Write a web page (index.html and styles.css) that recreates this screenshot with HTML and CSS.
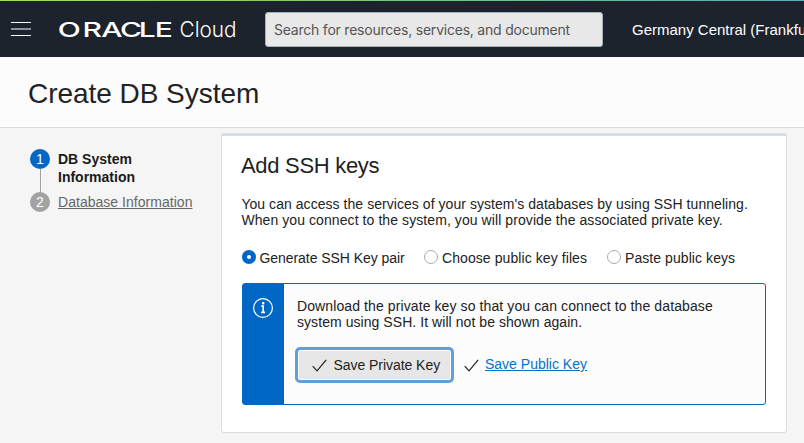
FILE: index.html
```html
<!DOCTYPE html>
<html lang="en">
<head>
<meta charset="utf-8">
<title>Create DB System</title>
<link rel="stylesheet" href="styles.css">
</head>
<body>
<header class="topbar">
  <button class="menu" aria-label="Menu"><span></span><span></span><span></span></button>
  <svg class="logo" width="180" height="24" viewBox="0 0 180 24" role="img">
    <text class="logo-brand" transform="scale(1.5 1)" x="-0.9 15.6 28.1 40.7 53.2 63.8" y="19">ORACLE</text>
    <text class="logo-cloud" x="120.6" y="19.4" textLength="57" lengthAdjust="spacingAndGlyphs">Cloud</text>
  </svg>
  <div class="search">Search for resources, services, and document</div>
  <div class="region">Germany Central (Frankfurt)</div>
</header>
<div class="titlebar"><h1>Create DB System</h1></div>
<main class="layout">
  <ol class="steps">
    <li class="step active"><span class="dot">1</span><span class="step-label">DB System<br>Information</span></li>
    <li class="step"><span class="dot">2</span><a class="step-label">Database Information</a></li>
  </ol>
  <section class="card">
    <h2>Add SSH keys</h2>
    <p class="intro">You can access the services of your system's databases by using SSH tunneling.<br><span class="intro-end">When you connect to the system, you will provide the associated private key.</span></p>
    <div class="radios">
      <label class="radio r1"><i class="on"></i><span>Generate SSH Key pair</span></label>
      <label class="radio r2"><i></i><span>Choose public key files</span></label>
      <label class="radio r3"><i></i><span>Paste public keys</span></label>
    </div>
    <div class="notice">
      <div class="notice-side">
        <svg width="20" height="20" viewBox="0 0 20 20" fill="none" stroke="#fff"><circle cx="10" cy="10" r="9.4" stroke-width="1.2"/><path d="M8.3 8.1H10.2V14.8M8.1 14.4H12.1" stroke-width="1.6"/><path d="M10.2 4V6.4" stroke-width="2.2"/></svg>
      </div>
      <div class="notice-body">
        <p>Download the private key so that you can connect to the database<br><span class="notice-end">system using SSH. It will not be shown again.</span></p>
        <div class="actions">
          <button class="save"><svg class="check" width="15" height="13" viewBox="0 0 15 13"><path d="M.7 7.2 5 11.8 14.2.8"/></svg><span>Save Private Key</span></button>
          <svg class="check second" width="15" height="13" viewBox="0 0 15 13"><path d="M.7 7.2 5 11.8 14.2.8"/></svg>
          <a class="link">Save Public Key</a>
        </div>
      </div>
    </div>
  </section>
</main>
</body>
</html>
```
FILE: styles.css
```css
* { box-sizing: border-box; }
body {
  margin: 0;
  height: 443px;
  overflow: hidden;
  background: #f5f5f5;
  color: #222;
  font: 14px/16px "Liberation Sans", Arial, sans-serif;
}
h1, h2, p, ol { margin: 0; padding: 0; font-weight: 400; }
button { font: inherit; color: inherit; border: 0; padding: 0; }
.topbar {
  display: flex;
  height: 57px;
  padding-top: 1px;
  background: linear-gradient(90deg, #a0e35c, #7fd06f 35%, #68bd96 70%, #5aa9bd) top / 100% 1px no-repeat #1c232c;
  white-space: nowrap;
}
.menu {
  flex: none;
  display: flex;
  flex-direction: column;
  gap: 6px;
  width: 20px;
  margin: 21px 28px 0 11px;
  background: none;
}
.menu span { height: 1px; background: #fff; }
.menu span:nth-child(2) { height: 2px; margin: -1px 0 0; background: #8e9194; }
.menu span:nth-child(3) { margin-top: -1px; }
.logo { flex: none; margin-top: 17px; overflow: visible; }
.logo text { fill: #fff; }
.logo-brand { font: 500 20px Inter, sans-serif; }
.logo-cloud { font: 300 22px Inter, sans-serif; }
.search {
  flex: none;
  width: 338px;
  height: 35px;
  margin: 11px 29px 0 26px;
  padding-left: 8px;
  border: 1px solid #a3b1b8;
  border-radius: 3px;
  background: #e8e8e8;
  color: #555;
  font: 14px/34px Inter, sans-serif;
  letter-spacing: -.22px;
}
.region { flex: none; color: #fff; font-size: 15px; line-height: 58px; }
.titlebar { height: 71px; border-bottom: 1px solid #ddd; background: #fcfcfc; }
h1 { padding: 20px 0 0 28px; font-size: 28px; line-height: 34px; letter-spacing: -.04px; }
.layout { display: flex; }
.steps { flex: none; width: 221px; padding: 21px 0 0 30px; list-style: none; }
.step { position: relative; display: flex; gap: 8px; height: 43px; }
.step.active::before {
  content: "";
  position: absolute;
  left: 10px;
  top: 20px;
  width: 1px;
  height: 23px;
  background: #a2a2a2;
}
.dot {
  width: 20px;
  height: 20px;
  border-radius: 50%;
  background: #a2a2a2;
  color: #fff;
  line-height: 20px;
  text-align: center;
}
.active .dot { background: #0067c5; }
.step-label { margin-top: 1px; line-height: 18px; color: #666; letter-spacing: .03px; text-decoration: underline; text-underline-offset: 1px; white-space: nowrap; }
.active .step-label { color: #1a1a1a; font-weight: 700; letter-spacing: 0; text-decoration: none; }
.card {
  width: 566px;
  height: 300px;
  margin-top: 5px;
  padding: 17px 19px 0;
  border: 1px solid #d9dde0;
  border-top: 3px solid #d9dde0;
  border-radius: 3px;
  background: #fff;
  white-space: nowrap;
}
h2 { font-size: 22px; line-height: 26px; letter-spacing: -.3px; }
.intro { margin-top: 17px; padding-left: .4px; letter-spacing: .05px; }
.intro-end { letter-spacing: .08px; }
.radios { display: flex; height: 18px; margin-top: 21px; padding-left: 1px; }
.radio { display: flex; align-items: center; gap: 4px; }
.radio i { width: 14px; height: 14px; margin-top: -2px; border: 1px solid #a6abb8; border-radius: 50%; background: #fff; }
.radio i.on { border: 5px solid #0067c5; }
.r1 { width: 182px; gap: 3.5px; letter-spacing: -.06px; }
.r2 { width: 183px; letter-spacing: .08px; }
.r3 { letter-spacing: .07px; }
.notice { display: flex; width: 524px; height: 122px; margin: 16px 0 0 1px; border: 1px solid #0067c5; border-radius: 3px; background: #fcfcfc; }
.notice-side { width: 41px; padding: 14px 0 0 10px; background: #0067c5; }
.notice-body { padding: 14px 0 0 13px; letter-spacing: .1px; }
.notice-end { letter-spacing: .06px; }
.actions { display: flex; margin: 17px 0 0 -2px; letter-spacing: 0; }
.save {
  display: flex;
  align-items: center;
  gap: 6.5px;
  width: 159px;
  height: 36px;
  padding-left: 14px;
  border: 3px solid #629fda;
  border-radius: 5px;
  background: #e6e6e6;
  box-shadow: inset 0 0 0 1px #fff;
  letter-spacing: -.05px;
}
.check { fill: none; stroke: #222; stroke-width: 1.2; }
.second { margin: 12px 6px 0 10px; }
.link { margin-top: 9px; color: #0572c8; text-decoration: underline; text-underline-offset: 1px; }
```
